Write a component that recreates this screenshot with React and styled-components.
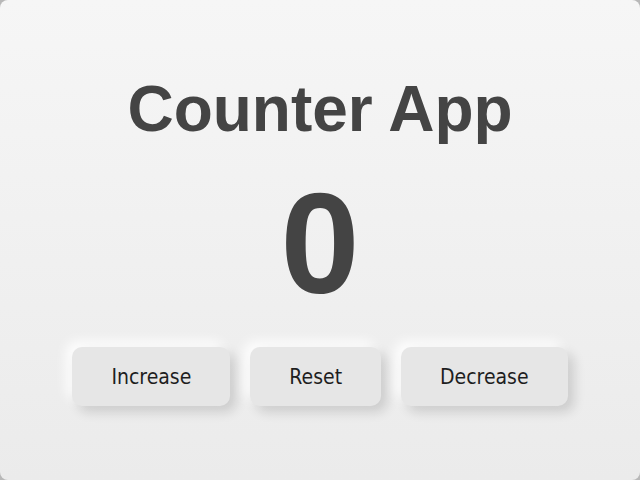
import React, { useState } from "react";
import styled, { createGlobalStyle } from "styled-components";

const GlobalStyle = createGlobalStyle`
  * { box-sizing: border-box; }
  html, body {
    margin: 0;
    padding: 0;
    background: #b8b8b8;
  }
`;

const Card = styled.div`
  width: 640px;
  height: 480px;
  border-radius: 8px;
  background: linear-gradient(180deg, #f6f6f6 0%, #ebebeb 100%);
  display: flex;
  flex-direction: column;
  align-items: center;
  font-family: "Liberation Sans", Arial, sans-serif;
`;

const Title = styled.h1`
  margin: 72px 0 0;
  font-size: 64px;
  line-height: 74px;
  font-weight: 700;
  color: #444444;
`;

const Count = styled.div`
  margin-top: 24px;
  font-size: 142px;
  line-height: 148px;
  font-weight: 700;
  color: #444444;
`;

const Buttons = styled.div`
  display: flex;
  gap: 20px;
  margin-top: 29px;
`;

const Button = styled.button`
  border: none;
  border-radius: 10px;
  background: #e6e6e6;
  color: #1e1e1e;
  font-family: "DejaVu Sans Condensed", "DejaVu Sans", Verdana, sans-serif;
  font-stretch: condensed;
  font-size: 21px;
  line-height: 24px;
  height: 59px;
  padding: 0 39px;
  box-shadow: 6px 6px 12px rgba(0, 0, 0, 0.14), -6px -6px 12px rgba(255, 255, 255, 0.9);
  cursor: pointer;
`;

export default function App() {
  const [count, setCount] = useState(0);
  return (
    <>
      <GlobalStyle />
      <Card>
        <Title>Counter App</Title>
        <Count>{count}</Count>
        <Buttons>
          <Button onClick={() => setCount(count + 1)}>Increase</Button>
          <Button onClick={() => setCount(0)}>Reset</Button>
          <Button onClick={() => setCount(count - 1)}>Decrease</Button>
        </Buttons>
      </Card>
    </>
  );
}
